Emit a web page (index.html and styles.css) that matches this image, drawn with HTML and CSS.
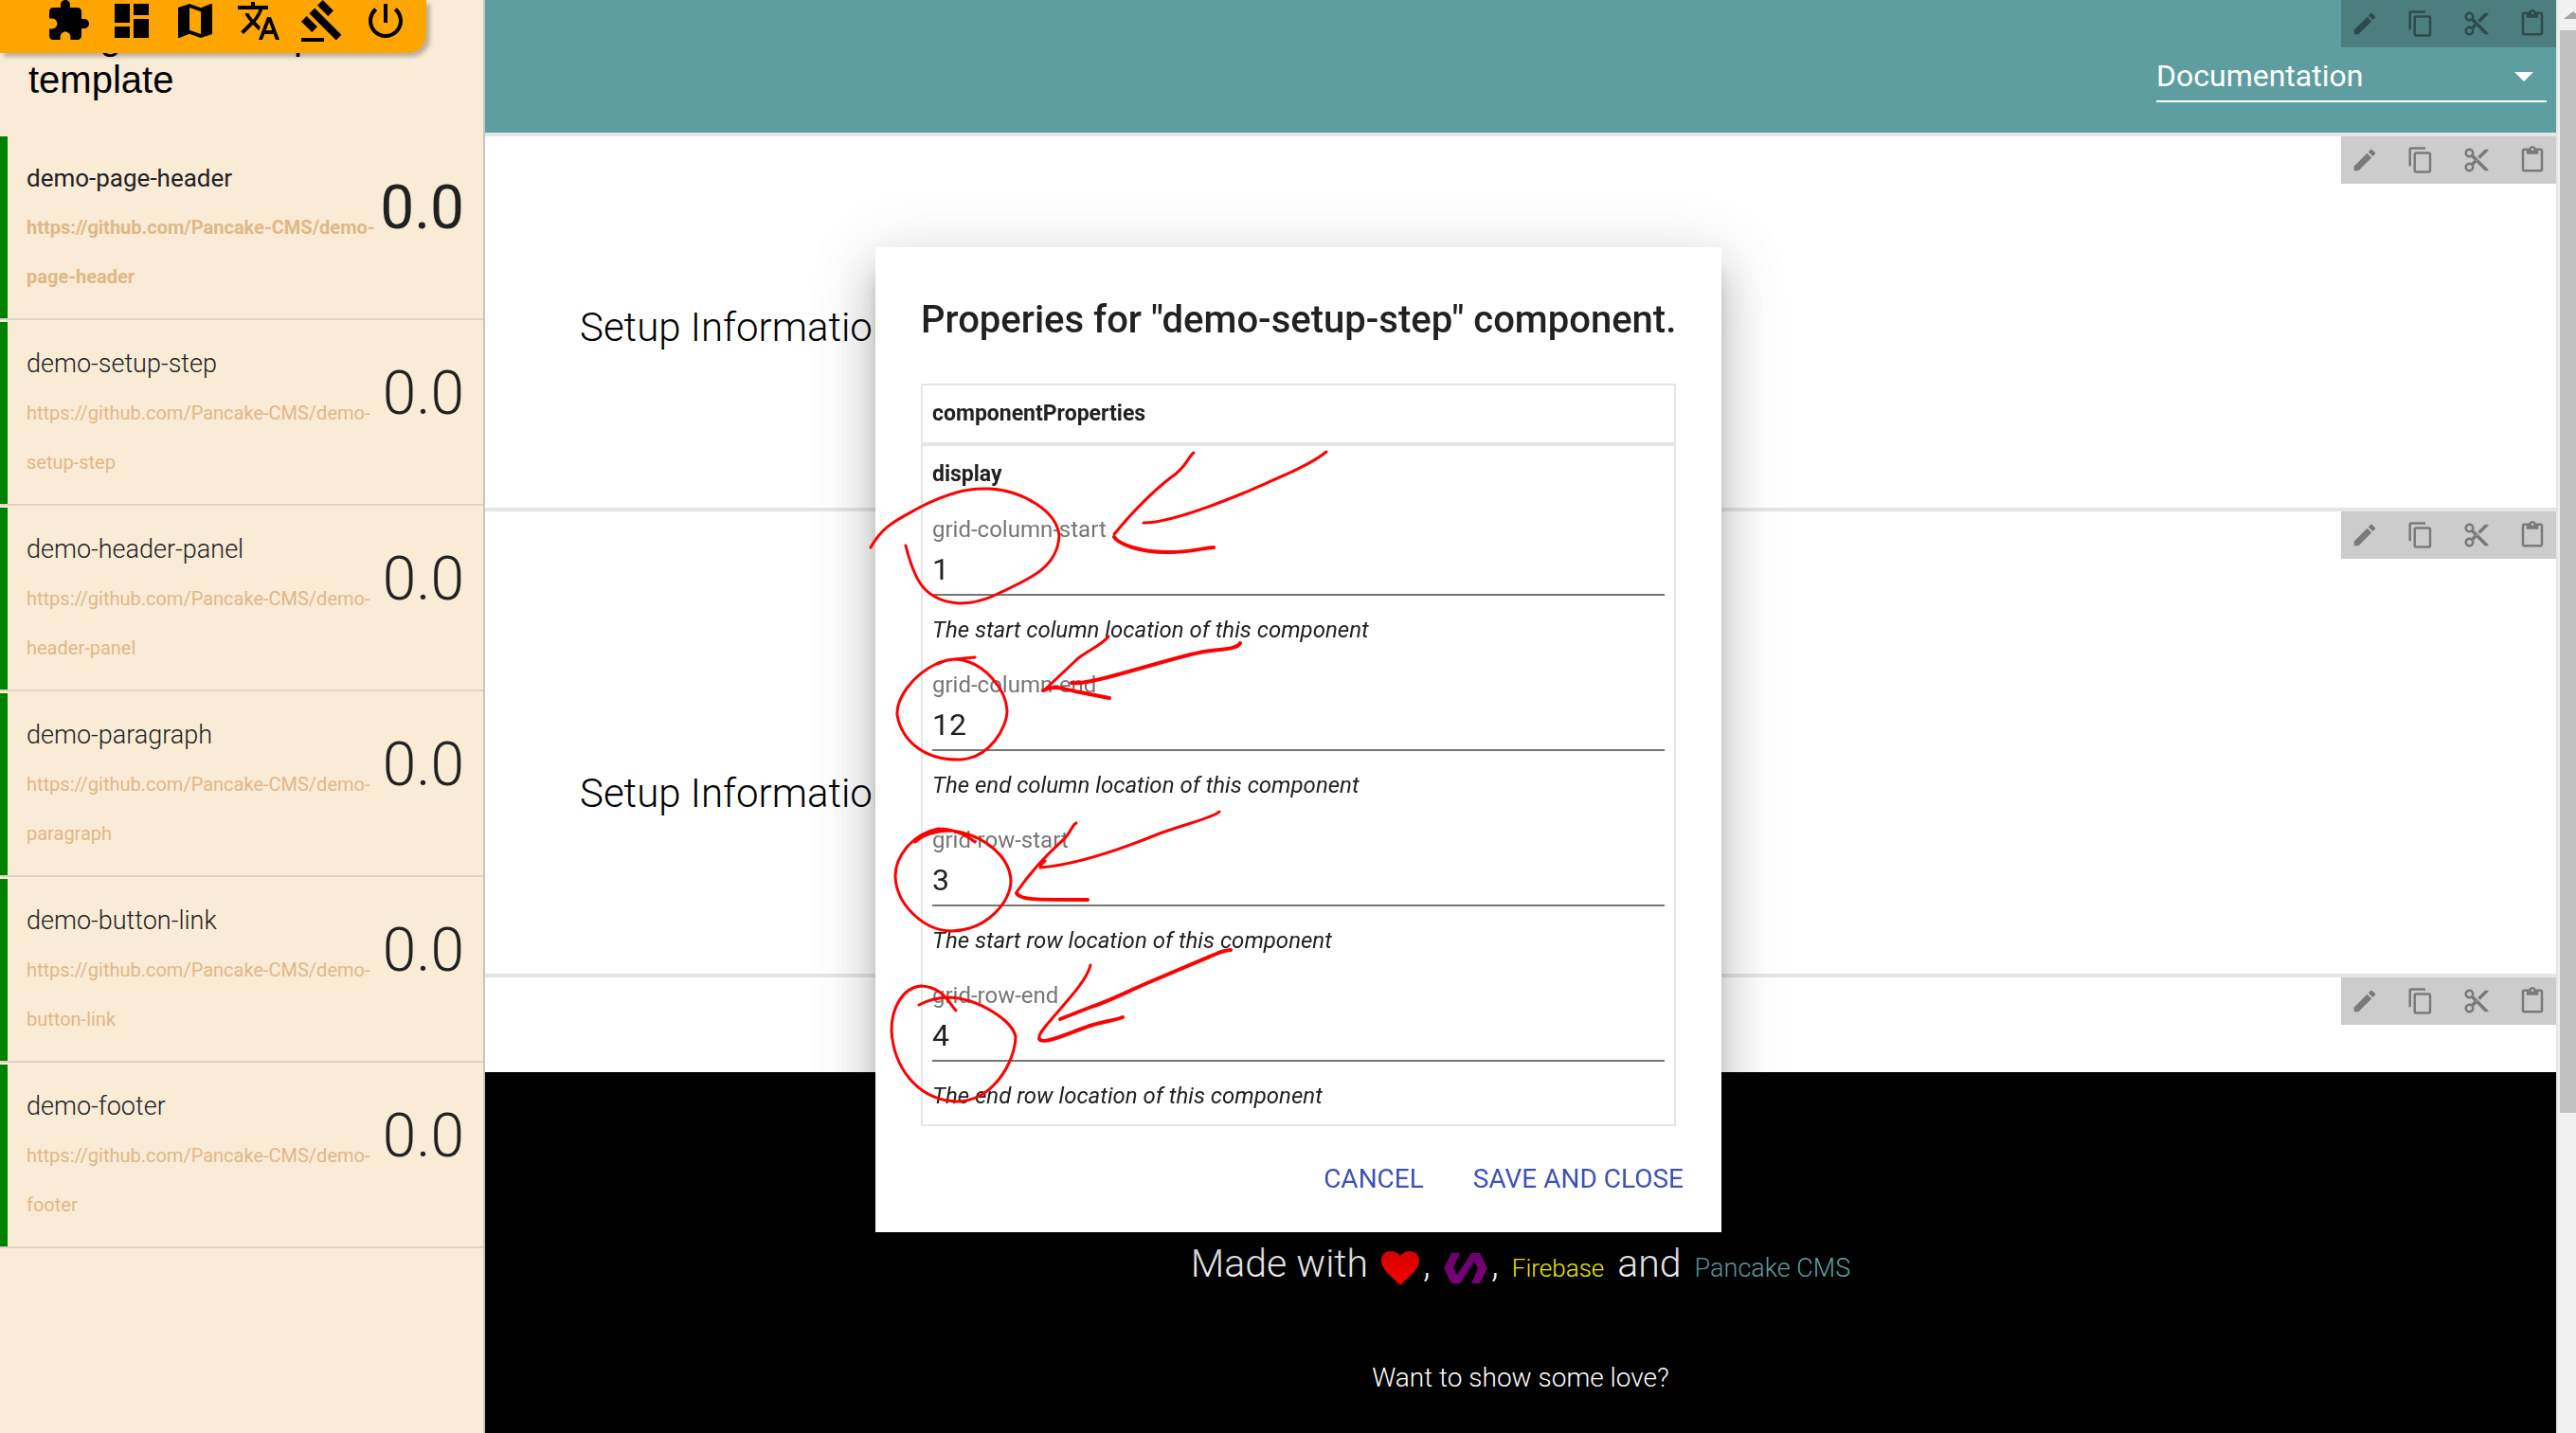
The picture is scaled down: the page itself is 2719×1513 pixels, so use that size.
FILE: index.html
```html
<!DOCTYPE html>
<html lang="en">
<head>
<meta charset="utf-8">
<title>Pancake CMS</title>
<link rel="stylesheet" href="styles.css">
</head>
<body>
<svg class="sprite" aria-hidden="true">
  <symbol id="edit" viewBox="0 0 24 24"><path d="M3 17.25V21h3.75L17.81 9.94l-3.75-3.75L3 17.25zM20.71 7.04c.39-.39.39-1.02 0-1.41l-2.34-2.34c-.39-.39-1.02-.39-1.41 0l-1.83 1.83 3.75 3.75 1.83-1.83z"/></symbol>
  <symbol id="copy" viewBox="0 0 24 24"><path d="M16 1H4c-1.1 0-2 .9-2 2v14h2V3h12V1zm3 4H8c-1.1 0-2 .9-2 2v14c0 1.1.9 2 2 2h11c1.1 0 2-.9 2-2V7c0-1.1-.9-2-2-2zm0 16H8V7h11v14z"/></symbol>
  <symbol id="cut" viewBox="0 0 24 24"><path d="M9.64 7.64c.23-.5.36-1.05.36-1.64 0-2.21-1.79-4-4-4S2 3.79 2 6s1.79 4 4 4c.59 0 1.14-.13 1.64-.36L10 12l-2.36 2.36C7.14 14.13 6.59 14 6 14c-2.21 0-4 1.79-4 4s1.79 4 4 4 4-1.79 4-4c0-.59-.13-1.14-.36-1.64L12 14l7 7h3v-1L9.64 7.64zM6 8c-1.1 0-2-.89-2-2s.9-2 2-2 2 .89 2 2-.9 2-2 2zm0 12c-1.1 0-2-.89-2-2s.9-2 2-2 2 .89 2 2-.9 2-2 2zm6-7.5c-.28 0-.5-.22-.5-.5s.22-.5.5-.5.5.22.5.5-.22.5-.5.5zM19 3l-6 6 2 2 7-7V3z"/></symbol>
  <symbol id="paste" viewBox="0 0 24 24"><path d="M19 2h-4.18C14.4.84 13.3 0 12 0c-1.3 0-2.4.84-2.82 2H5c-1.1 0-2 .9-2 2v16c0 1.1.9 2 2 2h14c1.1 0 2-.9 2-2V4c0-1.1-.9-2-2-2zm-7 0c.55 0 1 .45 1 1s-.45 1-1 1-1-.45-1-1 .45-1 1-1zm7 18H5V4h2v3h10V4h2v16z"/></symbol>
</svg>

<nav class="appbar" aria-label="Tools">
  <button class="tool" aria-label="Components"><svg viewBox="0 0 24 24"><path d="M20.5 11H19V7c0-1.1-.9-2-2-2h-4V3.5C13 2.12 11.88 1 10.5 1S8 2.12 8 3.5V5H4c-1.1 0-1.99.9-1.99 2v3.8H3.5c1.49 0 2.7 1.21 2.7 2.7s-1.21 2.7-2.7 2.7H2V20c0 1.1.9 2 2 2h3.8v-1.5c0-1.49 1.21-2.7 2.7-2.7 1.49 0 2.7 1.21 2.7 2.7V22H17c1.1 0 2-.9 2-2v-4h1.5c1.38 0 2.5-1.12 2.5-2.5S21.88 11 20.5 11z"/></svg></button>
  <button class="tool" aria-label="Dashboard"><svg viewBox="0 0 24 24"><path d="M3 13h8V3H3v10zm0 8h8v-6H3v6zm10 0h8V11h-8v10zm0-18v6h8V3h-8z"/></svg></button>
  <button class="tool" aria-label="Site map"><svg viewBox="0 0 24 24"><path d="M20.5 3l-.16.03L15 5.1 9 3 3.36 4.9c-.21.07-.36.25-.36.48V20.5c0 .28.22.5.5.5l.16-.03L9 18.9l6 2.1 5.64-1.9c.21-.07.36-.25.36-.48V3.5c0-.28-.22-.5-.5-.5zM15 19l-6-2.11V5l6 2.11V19z"/></svg></button>
  <button class="tool" aria-label="Translate"><svg viewBox="0 0 24 24"><path d="M12.87 15.07l-2.54-2.51.03-.03c1.74-1.94 2.98-4.17 3.71-6.53H17V4h-7V2H8v2H1v1.99h11.17C11.5 7.92 10.44 9.75 9 11.35 8.07 10.32 7.3 9.19 6.69 8h-2c.73 1.63 1.73 3.17 2.98 4.56l-5.09 5.02L4 19l5-5 3.11 3.11.76-2.04zM18.5 10h-2L12 22h2l1.12-3h4.75L21 22h2l-4.5-12zm-2.62 7l1.62-4.33L19.12 17h-3.24z"/></svg></button>
  <button class="tool" aria-label="Rules"><svg viewBox="0 0 24 24"><path d="M1 21h12v2H1zM5.245 8.07l2.83-2.827 14.14 14.142-2.828 2.828zM12.317 1l5.657 5.656-2.83 2.83-5.654-5.66zM3.825 9.485l5.657 5.657-2.828 2.828-5.657-5.657z"/></svg></button>
  <button class="tool" aria-label="Log out"><svg viewBox="0 0 24 24"><path d="M13 3h-2v10h2V3zm4.83 2.17l-1.42 1.42C17.99 7.86 19 9.81 19 12c0 3.87-3.13 7-7 7s-7-3.13-7-7c0-2.19 1.01-4.14 2.58-5.42L6.17 5.17C4.23 6.82 3 9.26 3 12c0 4.97 4.03 9 9 9s9-4.03 9-9c0-2.74-1.23-5.18-3.17-6.83z"/></svg></button>
</nav>

<div class="app">
  <aside class="sidebar">
    <h2 class="sidebar-title">Assign site component template</h2>
    <ul class="components">
      <li class="component selected"><div class="info"><span class="name">demo-page-header</span><a class="url" href="https://github.com/Pancake-CMS/demo-page-header">https://github.com/Pancake-CMS/demo-page-header</a></div><span class="version">0.0</span></li>
      <li class="component"><div class="info"><span class="name">demo-setup-step</span><a class="url" href="https://github.com/Pancake-CMS/demo-setup-step">https://github.com/Pancake-CMS/demo-setup-step</a></div><span class="version">0.0</span></li>
      <li class="component"><div class="info"><span class="name">demo-header-panel</span><a class="url" href="https://github.com/Pancake-CMS/demo-header-panel">https://github.com/Pancake-CMS/demo-header-panel</a></div><span class="version">0.0</span></li>
      <li class="component"><div class="info"><span class="name">demo-paragraph</span><a class="url" href="https://github.com/Pancake-CMS/demo-paragraph">https://github.com/Pancake-CMS/demo-paragraph</a></div><span class="version">0.0</span></li>
      <li class="component"><div class="info"><span class="name">demo-button-link</span><a class="url" href="https://github.com/Pancake-CMS/demo-button-link">https://github.com/Pancake-CMS/demo-button-link</a></div><span class="version">0.0</span></li>
      <li class="component"><div class="info"><span class="name">demo-footer</span><a class="url" href="https://github.com/Pancake-CMS/demo-footer">https://github.com/Pancake-CMS/demo-footer</a></div><span class="version">0.0</span></li>
    </ul>
  </aside>

  <main class="page">
    <header class="block block-header">
      <div class="block-tools">
        <button aria-label="Edit"><svg><use href="#edit"/></svg></button>
        <button aria-label="Copy"><svg><use href="#copy"/></svg></button>
        <button aria-label="Cut"><svg><use href="#cut"/></svg></button>
        <button aria-label="Paste"><svg><use href="#paste"/></svg></button>
      </div>
      <div class="select-wrap">
        <select class="select" aria-label="Section"><option>Documentation</option></select>
      </div>
    </header>
    <section class="block block-first">
      <div class="block-tools">
        <button aria-label="Edit"><svg><use href="#edit"/></svg></button>
        <button aria-label="Copy"><svg><use href="#copy"/></svg></button>
        <button aria-label="Cut"><svg><use href="#cut"/></svg></button>
        <button aria-label="Paste"><svg><use href="#paste"/></svg></button>
      </div>
      <h1 class="step-title">Setup Information</h1>
    </section>
    <section class="block block-second">
      <div class="block-tools">
        <button aria-label="Edit"><svg><use href="#edit"/></svg></button>
        <button aria-label="Copy"><svg><use href="#copy"/></svg></button>
        <button aria-label="Cut"><svg><use href="#cut"/></svg></button>
        <button aria-label="Paste"><svg><use href="#paste"/></svg></button>
      </div>
      <h1 class="step-title">Setup Information</h1>
    </section>
    <section class="block block-last">
      <div class="block-tools">
        <button aria-label="Edit"><svg><use href="#edit"/></svg></button>
        <button aria-label="Copy"><svg><use href="#copy"/></svg></button>
        <button aria-label="Cut"><svg><use href="#cut"/></svg></button>
        <button aria-label="Paste"><svg><use href="#paste"/></svg></button>
      </div>
    </section>
    <footer class="footer">
      <p class="made">
        <span>Made with</span>
        <span class="glyph"><svg class="heart" viewBox="0 0 40 36"><path d="M20 36C9 25 0 19 0 10C0 4 4 0 10 0c4 0 8 2 10 5C22 2 26 0 30 0c6 0 10 4 10 10C40 19 31 25 20 36z"/></svg>,</span>
        <span class="glyph"><svg class="polymer" viewBox="0 0 46 32"><path d="M8 0H17L10 16l4 7L29 0h9l8 16-8 16h-9l7-16-4-7L17 32H8L0 16z"/></svg>,</span>
        <span class="firebase">Firebase</span>
        <span>and</span>
        <a class="pancake" href="#">Pancake CMS</a>
      </p>
      <p class="love">Want to show some love?</p>
    </footer>
  </main>
  <div class="scrollbar" aria-hidden="true"><i class="scroll-up"></i><i class="scroll-thumb"></i></div>
</div>

<div class="overlay">
  <form class="dialog" role="dialog" aria-labelledby="dialog-title">
    <h2 class="dialog-title" id="dialog-title">Properies for "demo-setup-step" component.</h2>
    <div class="props">
      <h3 class="props-head">componentProperties</h3>
      <div class="props-body">
        <h3 class="props-name">display</h3>
        <div class="field"><label for="cs">grid-column-start</label><input id="cs" type="text" value="1"><em>The start column location of this component</em></div>
        <div class="field"><label for="ce">grid-column-end</label><input id="ce" type="text" value="12"><em>The end column location of this component</em></div>
        <div class="field"><label for="rs">grid-row-start</label><input id="rs" type="text" value="3"><em>The start row location of this component</em></div>
        <div class="field"><label for="re">grid-row-end</label><input id="re" type="text" value="4"><em>The end row location of this component</em></div>
      </div>
    </div>
    <div class="actions">
      <button type="button">CANCEL</button>
      <button type="button">SAVE AND CLOSE</button>
    </div>
    <svg class="ink" viewBox="924 261 893 1040" aria-hidden="true">
      <path d="M919 578C932 555 945 550 972 535C998 522 1020 515 1044 516C1080 518 1116 540 1118 566C1116 600 1085 612 1055 626C1040 634 1025 637 1012 637C975 634 965 612 956 576"/>
      <path d="M1260 478C1254 482 1252 494 1236 504C1218 518 1200 535 1176 564"/>
      <path class="bold" d="M1176 567C1181 575 1205 583 1230 583C1250 584 1262 580 1281 578"/>
      <path d="M1400 477C1382 492 1345 506 1314 520C1280 534 1232 552 1207 552"/>
      <path d="M1029 694C1012 696 1002 695 990 700C962 713 946 738 947 755C952 782 975 803 1014 802C1045 800 1063 768 1063 750C1062 729 1040 699 1010 696C1002 696 995 698 990 701"/>
      <path d="M1170 672C1163 681 1148 687 1138 695L1104 727"/>
      <path class="bold" d="M1101 729C1112 723 1122 727 1135 730L1171 737"/>
      <path class="bold" d="M1309 679C1305 687 1282 685 1266 689C1236 695 1176 715 1152 719C1143 721 1140 722 1131 721"/>
      <path d="M1029 889C1018 880 1005 875 990 875C962 881 945 905 945 925C946 955 975 983 1005 983C1042 982 1067 952 1067 930C1066 905 1040 882 1005 877C988 877 974 882 966 889"/>
      <path d="M1136 869C1132 870 1130 880 1122 887C1105 902 1087 922 1073 942"/>
      <path class="bold" d="M1073 943C1076 950 1092 950 1148 950"/>
      <path d="M1287 857C1281 863 1255 869 1224 880C1180 898 1135 913 1098 916Q1097 914 1103 909"/>
      <path d="M1009 1067C1001 1058 995 1042 972 1041C952 1043 941 1065 941 1088C943 1125 967 1162 1011 1163C1048 1162 1071 1122 1072 1095C1070 1079 1035 1055 1003 1053Q985 1053 970 1061"/>
      <path d="M1151 1019C1147 1037 1120 1063 1104 1083C1100 1088 1096 1093 1097 1096"/>
      <path class="bold" d="M1097 1097C1100 1104 1130 1090 1145 1085C1160 1079 1175 1078 1185 1074"/>
      <path class="bold" d="M1299 1003Q1290 1004 1284 1007L1206 1040C1184 1050 1168 1058 1152 1063L1119 1076"/>
    </svg>
  </form>
</div>
</body>
</html>
```

FILE: styles.css
```css
* { box-sizing: border-box; }
body { margin: 0; font-family: Roboto, sans-serif; color: #212121; overflow: hidden; }
h1, h2, h3, p, ul { margin: 0; padding: 0; }
button { border: 0; padding: 0; background: none; font: inherit; color: inherit; cursor: pointer; }
svg { display: block; fill: currentColor; }
.sprite { display: none; }

.appbar {
  position: absolute; top: 0; left: 0; z-index: 2;
  display: flex; gap: 19px; height: 56px; padding: 0 19px 0 48px;
  background: orange; color: #000;
  border-bottom-right-radius: 20px;
  box-shadow: 4px 4px 4px rgba(0, 0, 0, .25);
}
.tool { margin-top: -2px; width: 48px; height: 48px; }
.tool svg { width: 48px; height: 48px; }

.app { display: grid; grid-template-columns: 512px 1fr 19px; height: 100vh; }

.sidebar { background: antiquewhite; border-right: 2px solid #c4c4c4; overflow: hidden; }
.sidebar-title {
  padding: 15px 28px 0 30px; height: 144px;
  font: 400 40px/46px "Liberation Sans", sans-serif; color: #000;
}
.components { list-style: none; display: flex; flex-direction: column; gap: 2px; }
.component {
  position: relative;
  display: flex; align-items: center; justify-content: space-between;
  height: 194px; padding: 0 20px 0 28px;
  border-bottom: 2px solid #e1d3c3;
  font-weight: 300;
}
.component::before { content: ""; position: absolute; left: 0; top: 0; bottom: 0; width: 8px; background: green; }
.info { display: flex; flex-direction: column; width: 372px; }
.name { font-size: 27px; line-height: 52px; }
.url { font-size: 20px; line-height: 52px; font-weight: 400; color: burlywood; text-decoration: none; }
.version { font-size: 64px; line-height: 76px; padding-bottom: 40px; }
.selected { font-weight: 400; }
.selected .name { font-size: 26px; }
.selected .url { font-weight: 700; }

.page { display: flex; flex-direction: column; border-right: 2px solid #e5e5e5; overflow: hidden; background: #fff; }
.block { position: relative; flex: none; border-bottom: 4px solid #e5e5e5; }
.block-header { height: 144px; padding: 58px 10px 0; background: cadetblue; }
.block-first { height: 396px; padding: 172px 100px 0; }
.block-second { height: 492px; padding: 268px 100px 0; }
.block-last { height: 100px; border-bottom: 0; }
.block-tools {
  position: absolute; top: 0; right: 0;
  display: flex; gap: 29px; padding: 10px;
  background: rgba(0, 0, 0, .2); color: rgba(0, 0, 0, .4);
}
.block-tools button, .block-tools svg { width: 30px; height: 30px; }
.select-wrap { position: relative; width: 412px; margin-left: auto; }
.select-wrap::after {
  content: ""; position: absolute; right: 14px; top: 18px;
  border: 10px solid transparent; border-top-color: #fff; border-bottom: 0;
}
.select {
  appearance: none; width: 100%; height: 50px; padding: 0 0 4px;
  border: 0; border-bottom: 2px solid #fff; border-radius: 0;
  background: none; color: #fff; font: 400 32px/40px Roboto, sans-serif;
}
.step-title { font: 300 42px/60px Roboto, sans-serif; color: #000; }

.footer { flex: 1; padding-top: 172px; background: #000; color: #fff; text-align: center; font-weight: 300; }
.made { display: flex; justify-content: center; align-items: baseline; gap: 14px; font-size: 41px; line-height: 60px; }
.glyph svg { display: inline-block; margin-right: 4px; }
.heart { width: 40px; height: 36px; color: red; vertical-align: -9px; }
.polymer { width: 46px; height: 32px; color: purple; vertical-align: -7px; }
.firebase { font-size: 26px; color: yellow; }
.pancake { font-size: 27px; color: cadetblue; text-decoration: none; }
.love { margin-top: 56px; font-size: 28px; line-height: 60px; }

.scrollbar { background: #f1f1f1; display: flex; flex-direction: column; padding-left: 2px; overflow: hidden; }
.scroll-up { flex: none; width: 0; height: 0; margin: 12px 0 12px 4px; border: 10px solid transparent; border-top: 0; border-bottom: 8px solid #a3a3a3; }
.scroll-thumb { background: #c1c1c1; height: 1143px; }

.overlay { position: fixed; inset: 0; z-index: 3; display: grid; place-items: center; padding: 49px 0 0 22px; }
.dialog {
  position: relative; width: 893px; padding: 49px 48px 28px; background: #fff;
  box-shadow: 0 32px 48px 4px rgba(0, 0, 0, .14), 0 12px 60px 10px rgba(0, 0, 0, .12), 0 16px 20px -10px rgba(0, 0, 0, .4);
}
.dialog-title { font-size: 40px; line-height: 56px; font-weight: 500; white-space: nowrap; }
.props { margin-top: 39px; border: 2px solid #e5e5e5; }
.props h3 { font-size: 23px; line-height: 28px; font-weight: 700; }
.props-head { padding: 16px 10px; }
.props-body { display: flex; flex-direction: column; gap: 30px; padding: 16px 10px; border-top: 4px solid #e5e5e5; }
.field { display: flex; flex-direction: column; font-size: 24px; line-height: 28px; }
.field label { color: #757575; }
.field input {
  height: 56px; padding: 2px 0 0; border: 0; border-bottom: 2px solid #757575; outline: 0;
  background: none; font: 400 32px/40px Roboto, sans-serif; color: #212121;
}
.field em { margin-top: 22px; }
.actions { display: flex; justify-content: flex-end; gap: 52px; padding-top: 28px; margin-right: -8px; font-size: 28px; line-height: 56px; color: #3f51b5; }
.ink { position: absolute; inset: 0; width: 100%; height: 100%; overflow: visible; fill: none; stroke: red; stroke-width: 3; stroke-linecap: round; stroke-linejoin: round; pointer-events: none; }
.ink .bold { stroke-width: 4; }
```
